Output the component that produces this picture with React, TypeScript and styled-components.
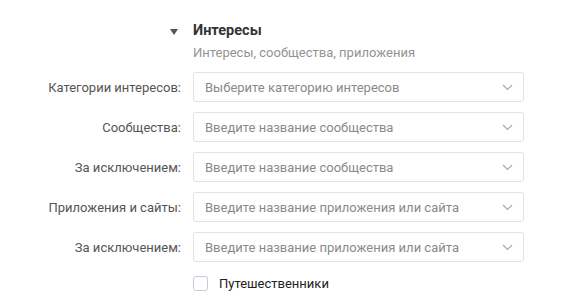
import React from "react";
import styled, { createGlobalStyle } from "styled-components";

const Global = createGlobalStyle`
  html, body { margin: 0; padding: 0; background: #fff; }
  body { font-family: Roboto, "Noto Sans", Arial, sans-serif; -webkit-font-smoothing: antialiased; }
`;

const Form = styled.div`
  display: grid;
  grid-template-columns: 181px 331px;
  column-gap: 12px;
  row-gap: 10px;
  padding-top: 22px;
`;

const Toggle = styled.div`
  display: flex;
  justify-content: flex-end;
  padding-right: 3px;
  padding-top: 7px;
`;

const Header = styled.div`
  display: flex;
  flex-direction: column;
  gap: 3px;
`;

const Title = styled.div`
  font-size: 14.5px;
  font-weight: 700;
  color: #333;
  line-height: 18px;
`;

const Subtitle = styled.div`
  font-size: 13px;
  color: #939393;
  line-height: 19px;
`;

const Label = styled.div`
  font-size: 13px;
  color: #555;
  text-align: right;
  display: flex;
  align-items: center;
  justify-content: flex-end;
  height: 30px;
`;

const Select = styled.div`
  box-sizing: border-box;
  height: 30px;
  border: 1px solid #dfe3e8;
  border-radius: 3px;
  display: flex;
  align-items: center;
  justify-content: space-between;
  padding: 0 10px 0 11px;
  font-size: 13px;
  color: #8a8a8a;
`;

const Check = styled.label`
  display: flex;
  align-items: center;
  gap: 11px;
  font-size: 13px;
  color: #222;
  margin-top: 4px;
`;

const Box = styled.span`
  box-sizing: border-box;
  width: 15px;
  height: 15px;
  border: 1px solid #c5cdd6;
  border-radius: 3px;
`;

const Chevron = () => (
  <svg width="11" height="7" viewBox="0 0 11 7" fill="none">
    <path d="M1 1l4.5 4.5L10 1" stroke="#a4abb3" strokeWidth="1.2" />
  </svg>
);

const Triangle = () => (
  <svg width="8" height="6" viewBox="0 0 8 6">
    <path d="M0 0h8L4 6z" fill="#555" />
  </svg>
);

const rows: [string, string][] = [
  ["Категории интересов:", "Выберите категорию интересов"],
  ["Сообщества:", "Введите название сообщества"],
  ["За исключением:", "Введите название сообщества"],
  ["Приложения и сайты:", "Введите название приложения или сайта"],
  ["За исключением:", "Введите название приложения или сайта"],
];

export default function App() {
  return (
    <>
      <Global />
      <Form>
        <Toggle>
          <Triangle />
        </Toggle>
        <Header>
          <Title>Интересы</Title>
          <Subtitle>Интересы, сообщества, приложения</Subtitle>
        </Header>
        {rows.map(([l, p], i) => (
          <React.Fragment key={i}>
            <Label>{l}</Label>
            <Select>
              <span>{p}</span>
              <Chevron />
            </Select>
          </React.Fragment>
        ))}
        <div />
        <Check>
          <Box />
          Путешественники
        </Check>
      </Form>
    </>
  );
}
